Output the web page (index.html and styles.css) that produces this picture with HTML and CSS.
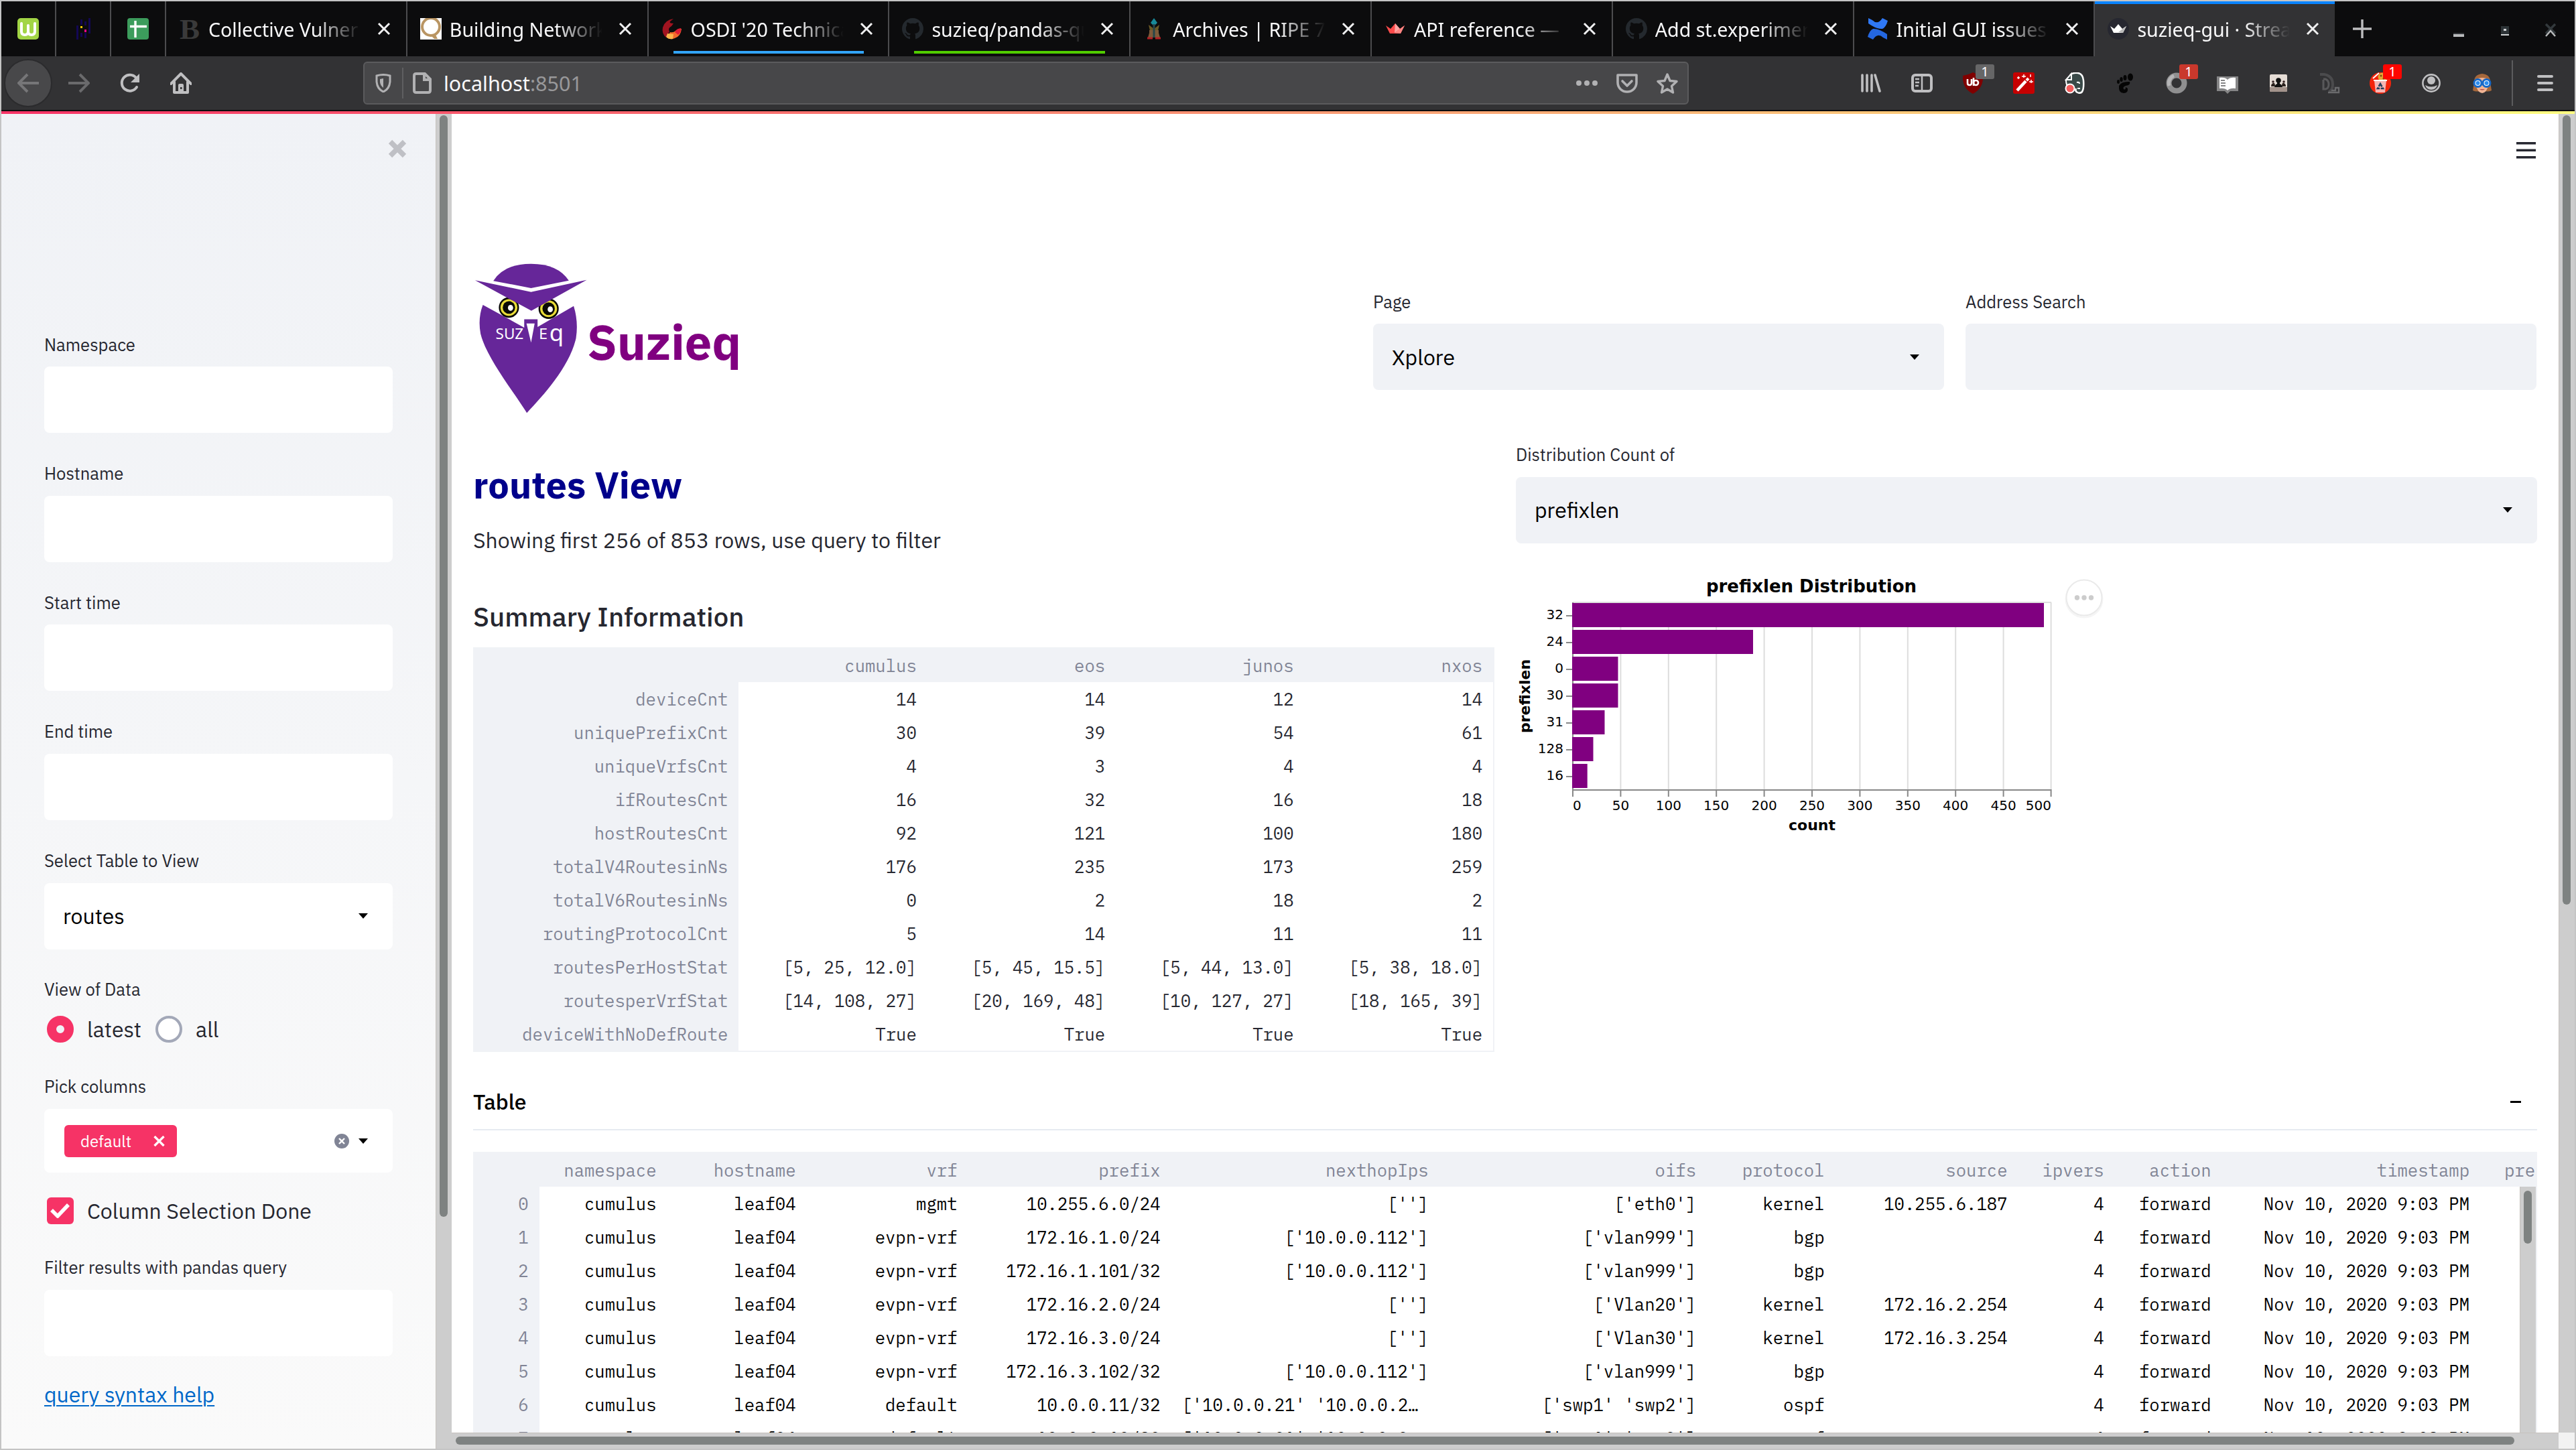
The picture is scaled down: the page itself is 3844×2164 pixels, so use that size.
FILE: index.html
```html
<!DOCTYPE html>
<html lang="en">
<head>
<meta charset="utf-8">
<title>suzieq-gui · Streamlit</title>
<link rel="stylesheet" href="styles.css">
</head>
<body>
<div class="window">
  <div class="tabstrip">
    <div class="pin"><svg class="ico" viewBox="0 0 32 32"><rect width="32" height="32" rx="5" fill="#a2d545"/><path d="M6 8v12q0 5 5 5t5-5v-9M16 20q0 5 5 5t5-5V8" fill="none" stroke="#fff" stroke-width="4" stroke-linecap="round"/></svg></div>
    <div class="pin"><svg class="ico" viewBox="0 0 32 32"><g fill="#130754"><path d="M6 11h3v21H6zM12 2h3v8h-3zM12 22h3v6h-3zM18 5h3v6h-3zM18 22h3v8h-3zM24 0h3v23h-3z"/></g><rect x="12" y="12" width="3" height="3" fill="#ffca00"/><rect x="18" y="17" width="3" height="4" fill="#e70488"/></svg></div>
    <div class="pin"><svg class="ico" viewBox="0 0 32 32"><rect width="32" height="32" rx="4" fill="#3c9c5c"/><path d="M12 4v25M4 12.500h25" stroke="#fff" stroke-width="3.400"/></svg></div>
    <div class="tab"><svg class="ico" viewBox="0 0 32 32"><text x="1" y="31" class="fav-b" textLength="30" lengthAdjust="spacingAndGlyphs">B</text></svg><span class="title">Collective Vulner</span><svg class="x" viewBox="0 0 20 20"><path d="M2 2l16 16M18 2L2 18"/></svg></div>
    <div class="tab"><svg class="ico" viewBox="0 0 32 32"><rect width="32" height="32" fill="#fff"/><circle cx="16" cy="13" r="13" fill="none" stroke="#b99563" stroke-width="4"/><path d="M15 25h8l3 6h-5z" fill="#b99563"/></svg><span class="title">Building Network</span><svg class="x" viewBox="0 0 20 20"><path d="M2 2l16 16M18 2L2 18"/></svg></div>
    <div class="tab blue"><svg class="ico" viewBox="0 0 32 32"><path d="M18 1Q5 3 2 14q-2 9 5 15l5-9q-3-5 3-8l3-4q-7 0-5-3z" fill="#a11420"/><path d="M30 16q-5-1-9 3-3 3-8 2l-5 8q5 4 12 1 9-3 10-14z" fill="#f36a2c"/><path d="M29 15q-7 1-9 6l5 4q5-4 4-10z" fill="#dd1c36"/><path d="M9 23l9 1-1 7q-6 1-10-3z" fill="#fcb64c"/></svg><span class="title">OSDI '20 Technica</span><svg class="x" viewBox="0 0 20 20"><path d="M2 2l16 16M18 2L2 18"/></svg></div>
    <div class="tab green"><svg class="ico" viewBox="0 0 16 16"><path class="gh" d="M8 0C3.58 0 0 3.58 0 8c0 3.54 2.29 6.53 5.47 7.59.4.07.55-.17.55-.38 0-.19-.01-.82-.01-1.49-2.01.37-2.53-.49-2.69-.94-.09-.23-.48-.94-.82-1.13-.28-.15-.68-.52-.01-.53.63-.01 1.08.58 1.23.82.72 1.21 1.87.87 2.33.66.07-.52.28-.87.51-1.07-1.78-.2-3.64-.89-3.64-3.95 0-.87.31-1.59.82-2.15-.08-.2-.36-1.02.08-2.12 0 0 .67-.21 2.2.82a7.6 7.6 0 014 0c1.53-1.04 2.2-.82 2.2-.82.44 1.1.16 1.92.08 2.12.51.56.82 1.27.82 2.15 0 3.07-1.87 3.75-3.65 3.95.29.25.54.73.54 1.48 0 1.07-.01 1.93-.01 2.2 0 .21.15.46.55.38A8 8 0 0016 8c0-4.42-3.58-8-8-8z"/></svg><span class="title">suzieq/pandas-qu</span><svg class="x" viewBox="0 0 20 20"><path d="M2 2l16 16M18 2L2 18"/></svg></div>
    <div class="tab"><svg class="ico" viewBox="0 0 32 32"><path d="M16 0l5 7-5 5-5-5z" fill="#178a99"/><path d="M8 10l8 6 8-6-2 9h-12z" fill="#6b5a25"/><path d="M9 18h14v4l2 7H7l2-7z" fill="#7d5a3a"/><path d="M16 9v20" stroke="#27464a" stroke-width="3"/><path d="M6 30h8M18 30h8" stroke="#b21f24" stroke-width="3"/></svg><span class="title">Archives | RIPE 71</span><svg class="x" viewBox="0 0 20 20"><path d="M2 2l16 16M18 2L2 18"/></svg></div>
    <div class="tab"><svg class="ico" viewBox="0 0 32 32"><path d="M2 11l6 12h16l6-12-7 5-7-8-7 8z" fill="#ff4b4b"/><path d="M16 8l7 8-8 6z" fill="#ffa5a3"/><path d="M30 11l-6 12-9-1z" fill="#ff8784"/></svg><span class="title">API reference —</span><svg class="x" viewBox="0 0 20 20"><path d="M2 2l16 16M18 2L2 18"/></svg></div>
    <div class="tab"><svg class="ico" viewBox="0 0 16 16"><path class="gh" d="M8 0C3.58 0 0 3.58 0 8c0 3.54 2.29 6.53 5.47 7.59.4.07.55-.17.55-.38 0-.19-.01-.82-.01-1.49-2.01.37-2.53-.49-2.69-.94-.09-.23-.48-.94-.82-1.13-.28-.15-.68-.52-.01-.53.63-.01 1.08.58 1.23.82.72 1.21 1.87.87 2.33.66.07-.52.28-.87.51-1.07-1.78-.2-3.64-.89-3.64-3.95 0-.87.31-1.59.82-2.15-.08-.2-.36-1.02.08-2.12 0 0 .67-.21 2.2.82a7.6 7.6 0 014 0c1.53-1.04 2.2-.82 2.2-.82.44 1.1.16 1.92.08 2.12.51.56.82 1.27.82 2.15 0 3.07-1.87 3.75-3.65 3.95.29.25.54.73.54 1.48 0 1.07-.01 1.93-.01 2.2 0 .21.15.46.55.38A8 8 0 0016 8c0-4.42-3.58-8-8-8z"/></svg><span class="title">Add st.experimer</span><svg class="x" viewBox="0 0 20 20"><path d="M2 2l16 16M18 2L2 18"/></svg></div>
    <div class="tab"><svg class="ico" viewBox="0 0 32 32"><path d="M2 0l6 3q8 8 15-3l8 4q-3 10-8 12-8 1-21-8z" fill="#2f78f5"/><path d="M30 32l-6-3q-8-8-15 3l-8-4q3-10 8-12 8-1 21 8z" fill="#2467e0"/></svg><span class="title">Initial GUI issues -</span><svg class="x" viewBox="0 0 20 20"><path d="M2 2l16 16M18 2L2 18"/></svg></div>
    <div class="tab active"><svg class="ico" viewBox="0 0 32 32"><circle cx="16" cy="16" r="16" fill="#262730"/><path d="M4 12l5 10h14l5-10-6 4-6-7-6 7z" fill="#fff"/><path d="M28 12l-5 10-7-1z" fill="#bbb"/></svg><span class="title">suzieq-gui · Strea</span><svg class="x" viewBox="0 0 20 20"><path d="M2 2l16 16M18 2L2 18"/></svg></div>
    <svg class="plus" viewBox="0 0 28 28"><path d="M14 0v28M0 14h28" stroke="#bdbdbf" stroke-width="3.4"/></svg>
    <div class="controls">
      <svg width="16" height="20" viewBox="0 0 16 20"><path d="M0 14h16v2H0z" fill="#323436"/><path d="M0 16h16v4H0z" fill="#b8babb"/></svg>
      <svg width="12" height="20" viewBox="0 0 12 20"><path d="M0 4h12v12H0z" fill="#2d3336"/><path d="M4 8h4v3H4zM0 16h12v2H0z" fill="#d0d2d3"/></svg>
      <svg width="16" height="20" viewBox="0 0 16 20"><path d="M1 1l14 14M15 1L1 15" stroke="#33393c" stroke-width="3.5"/><path d="M1 19l7-8 7 8" stroke="#b8babb" stroke-width="2.4" fill="none"/></svg>
    </div>
  </div>

  <div class="toolbar">
    <div class="nav">
      <div class="back"><svg class="ico" viewBox="0 0 32 32"><path d="M15 3L2 16l13 13M2 16h30" fill="none" stroke="#767678" stroke-width="4"/></svg></div>
      <svg class="ico" viewBox="0 0 32 32"><path d="M17 3l13 13-13 13M30 16H0" fill="none" stroke="#6a6a6c" stroke-width="4"/></svg>
      <svg class="ico" viewBox="0 0 32 32"><path d="M26 22A12 12 0 1 1 25 8" fill="none" stroke="#bfbfc1" stroke-width="4" stroke-linecap="round"/><path d="M30 2v13H17z" fill="#bfbfc1"/></svg>
      <svg class="ico" viewBox="0 0 32 32"><path d="M1 17L16 2l15 15M6 14v16h20V14" fill="none" stroke="#bfbfc1" stroke-width="4" stroke-linejoin="round" stroke-linecap="round"/><path d="M12 31V19q0-2 2-2h4q2 0 2 2v12z" fill="#bfbfc1"/><rect x="15" y="22" width="2.5" height="3" fill="#323234"/></svg>
    </div>
    <div class="urlbar">
      <svg class="shield" viewBox="0 0 24 28"><path d="M2 3q10-3 20 0v9q-1 11-10 15Q3 23 2 12z" fill="none" stroke="#b1b1b3" stroke-width="3"/><path d="M12 7v14q-5-4-5-9V8z" fill="#b1b1b3"/></svg>
      <i class="sep"></i>
      <svg class="page" viewBox="0 0 28 32"><path d="M5 2h13l8 8v17q0 3-3 3H5q-3 0-3-3V5q0-3 3-3zM17 2v9h9" fill="none" stroke="#b1b1b3" stroke-width="4"/></svg>
      <span class="url"><b>localhost</b>:8501</span>
      <div class="urlactions">
        <svg class="ico" viewBox="0 0 32 32" fill="#b1b1b3"><circle cx="4" cy="16" r="4"/><circle cx="16" cy="16" r="4"/><circle cx="28" cy="16" r="4"/></svg>
        <svg class="ico" viewBox="0 0 32 32" fill="none" stroke="#b1b1b3" stroke-width="3.6" stroke-linejoin="round"><path d="M2 4h28v11a14 14 0 0 1-28 0z"/><path d="M9 13l7 7 7-7" stroke-linecap="round"/></svg>
        <svg class="ico" viewBox="0 0 32 32"><path d="M16 3l4 9.500 10 1-7.500 7 2 9.500-8.500-5-8.500 5 2-9.500-7.500-7 10-1z" fill="none" stroke="#b1b1b3" stroke-width="3.4" stroke-linejoin="round"/></svg>
      </div>
    </div>
    <div class="addons">
      <svg class="ico" viewBox="0 0 32 32" stroke="#bfbfc1" stroke-width="3.6" stroke-linecap="round"><path d="M3 4v24M10 4v24M17 4v24M22 4l7 24"/></svg>
      <svg class="ico" viewBox="0 0 32 32"><rect x="2" y="4" width="28" height="24" rx="4" fill="none" stroke="#bfbfc1" stroke-width="4"/><path d="M16 4v24M6 10h6M6 15h6M6 20h5" stroke="#bfbfc1" stroke-width="2.500"/></svg>
      <div class="addon"><svg class="ico" viewBox="0 0 32 32"><path d="M16 0q7 4 15 5 1 19-15 27Q0 24 1 5q8-1 15-5z" fill="#800000"/><path d="M8 10v6q0 3 3 3t3-3v-6M17 8v12" fill="none" stroke="#fff" stroke-width="2.600"/><circle cx="20.500" cy="15.500" r="3.500" fill="none" stroke="#fff" stroke-width="2.600"/></svg><em class="badge gray">1</em></div>
      <svg class="ico" viewBox="0 0 32 32"><rect width="32" height="32" rx="3" fill="#c60000"/><path d="M6 27L19 13" stroke="#fff" stroke-width="4.500"/><path d="M20 12l3-3" stroke="#fff" stroke-width="4"/><path d="M16 3v5M13 6h6M27 11v5M24 14h6M26 3v4M8 6v4M6 8h4" stroke="#fff" stroke-width="1.500"/></svg>
      <svg class="ico" viewBox="0 0 32 32"><path d="M9 4q4-4 12-3 7 1 8 11 1 12-2 17-3 3-7 1-4-2-2-6" fill="#3a4a49" stroke="#fff" stroke-width="2.500"/><path d="M3 11l8-9v9z" fill="#3a4a49" stroke="#fff" stroke-width="2"/><path d="M3 12h16v11H6q-3-4-3-11z" fill="#3a4a49"/><path d="M3 11q0 6 2 9" stroke="#fff" stroke-width="2" fill="none"/><circle cx="9" cy="24" r="6.500" fill="#f25c5c" stroke="#fff" stroke-width="2"/><path d="M19 15q4-1 4 2M20 24h4" stroke="#fff" stroke-width="2" fill="none"/></svg>
      <svg class="ico" viewBox="0 0 32 32" fill="#050505"><ellipse cx="23" cy="7" rx="4" ry="5.500"/><ellipse cx="15" cy="8" rx="2.500" ry="4"/><ellipse cx="9.500" cy="10.500" rx="2.200" ry="3.500"/><ellipse cx="5" cy="14" rx="2" ry="3"/><path d="M22 14q-12-1-16 6-1 11 7 11 7 0 6-7l-3-2q0 5-3 3-2-3 3-5 8-1 6-6z"/></svg>
      <div class="addon"><svg class="ico" viewBox="0 0 32 32"><circle cx="16" cy="16" r="11.500" fill="none" stroke="#8f8f90" stroke-width="8"/><path d="M5 20A12 12 0 0 1 12 5" fill="none" stroke="#b5b5b6" stroke-width="5"/></svg><em class="badge brick">1</em></div>
      <svg class="ico" viewBox="0 0 32 32"><path d="M0 6h32v22H20l-4 4-4-4H0z" fill="#858586"/><path d="M4 8q8-1 12 3 4-4 12-3v16q-8-1-12 3-4-4-12-3z" fill="#fff"/><path d="M6 12h6M6 16h7M6 20h7" stroke="#858586" stroke-width="2"/></svg>
      <svg class="ico" viewBox="0 0 32 32"><rect x="3" y="3" width="26" height="26" rx="2" fill="#e6ddd6"/><path d="M3 22h26v5q0 2-2 2H5q-2 0-2-2z" fill="#a3938b"/><circle cx="16" cy="12" r="3.800" fill="#111"/><path d="M10 22q1-4 4-5v-3h4v3q3 1 4 5z" fill="#111"/><path d="M5 21q0-4 3-5t3 5zM21 21q0-6 3-5t3 5z" fill="#2b211d"/><circle cx="8" cy="14" r="1.800" fill="#322"/><circle cx="24" cy="14" r="1.800" fill="#322"/></svg>
      <svg class="ico" viewBox="0 0 32 32" fill="none"><path d="M2 3h6q13 2 13 15 0 9-6 11" stroke="#4b4b4d" stroke-width="4"/><path d="M7 10h3q5 2 5 8t-5 7H7v-14" stroke="#58585a" stroke-width="3"/><path d="M14 30h16v-7h-5v4h-6" stroke="#6a6a6c" stroke-width="2.400"/></svg>
      <div class="addon"><svg class="ico" viewBox="0 0 32 32"><circle cx="16" cy="16" r="16" fill="#f3240c"/><circle cx="19" cy="7" r="6.500" fill="#e3a736"/><circle cx="17" cy="5" r="1.500" fill="#7a4a14"/><circle cx="21" cy="9" r="1.500" fill="#7a4a14"/><path d="M5 9l9-8" stroke="#fff" stroke-width="2"/><path d="M7 12h18l-2 18H9z" fill="#f6b6b4"/><path d="M6 12h20" stroke="#fff" stroke-width="2"/><path d="M16 17l4 7h-8z" fill="none" stroke="#24415f" stroke-width="2.600" stroke-dasharray="5 1.500"/></svg><em class="badge red">1</em></div>
      <svg class="ico" viewBox="0 0 32 32"><circle cx="16" cy="16" r="12.600" fill="none" stroke="#bfbfc1" stroke-width="2.600"/><circle cx="16" cy="12" r="6" fill="#bfbfc1"/><path d="M7 19q9 5 18 0-2 7-9 7t-9-7z" fill="#bfbfc1"/></svg>
      <svg class="ico" viewBox="0 0 32 32"><path d="M16 2Q4 3 4 14l-2 13q6 3 14 0 8 3 14 0l-2-13Q28 3 16 2z" fill="#a6683c"/><path d="M7 10q9-4 18 0v10q-2 10-9 11-7-1-9-11z" fill="#f0b595"/><path d="M12 25q4 3 8 0z" fill="#b34a4a"/><circle cx="9.500" cy="16" r="5.500" fill="#fff" stroke="#1668c7" stroke-width="3"/><circle cx="22.500" cy="16" r="5.500" fill="#fff" stroke="#1668c7" stroke-width="3"/><circle cx="9.500" cy="16" r="3" fill="#2a8cf0"/><circle cx="22.500" cy="16" r="3" fill="#2a8cf0"/></svg>
    </div>
    <i class="barsep"></i>
    <svg class="menu" viewBox="0 0 24 24" stroke="#bfbfc1" stroke-width="4" stroke-linecap="round"><path d="M2 2h20M2 12h20M2 22h20"/></svg>
  </div>
  <div class="rainbow"></div>

  <div class="content">
    <aside class="sidebar">
      <svg class="close" viewBox="0 0 28 28"><path d="M3.500 3.500l21 21M24.500 3.500l-21 21" stroke="#bfc0c5" stroke-width="7.500"/></svg>
      <div class="field"><label>Namespace</label><div class="box"></div></div>
      <div class="field"><label>Hostname</label><div class="box"></div></div>
      <div class="field"><label>Start time</label><div class="box"></div></div>
      <div class="field"><label>End time</label><div class="box"></div></div>
      <div class="field"><label>Select Table to View</label><div class="box">routes<svg class="caret" viewBox="0 0 14 8"><path d="M0 0h14L7 8z"/></svg></div></div>
      <div class="field radios"><label>View of Data</label>
        <div class="choices"><span class="radio on"></span><span class="opt">latest</span><span class="radio"></span><span class="opt">all</span></div>
      </div>
      <div class="field pick"><label>Pick columns</label>
        <div class="box"><span class="tag">default<svg width="17" height="16" viewBox="0 0 17 16"><path d="M1.500 1l14 14M15.500 1l-14 14" stroke="#fff" stroke-width="3.400"/></svg></span>
          <svg class="clear" viewBox="0 0 22 22"><circle cx="11" cy="11" r="11" fill="#808495"/><path d="M7 7l8 8M15 7l-8 8" stroke="#fff" stroke-width="2.400"/></svg><svg class="caret" viewBox="0 0 14 8"><path d="M0 0h14L7 8z"/></svg></div>
      </div>
      <div class="check"><span class="tick"><svg width="30" height="22" viewBox="0 0 30 22"><path d="M2 10l9 9L27 2" fill="none" stroke="#fff" stroke-width="5.500"/></svg></span>Column Selection Done</div>
      <div class="field"><label>Filter results with pandas query</label><div class="box"></div></div>
      <a class="help">query syntax help</a>
    </aside>
    <div class="vscroll side"><i></i></div>

    <div class="pane">
      <div class="paneRow">
        <main class="main">
          <div class="topline"><svg width="29" height="26" viewBox="0 0 29 26" fill="#262730"><path d="M0 1h29v3.600H0zM0 11.500h29v3.600H0zM0 22h29v3.600H0z"/></svg></div>
          <div class="masthead">
            <svg class="owl" viewBox="54 70 350 510" preserveAspectRatio="none">
              <path fill="#662699" d="M116 133Q150 76 232 76T348 132L232 157z"/>
              <path fill="#662699" d="M84 213L211 289V261H252V287L363 217Q378 270 370 325C350 420 270 515 219 574C180 505 95 390 77 310Q68 258 84 213z"/>
              <g fill="#0a0a05"><ellipse cx="164" cy="222" rx="31" ry="34"/><ellipse cx="286" cy="226" rx="31" ry="34"/></g>
              <g fill="#e9dc38"><ellipse cx="164" cy="222" rx="26" ry="28"/><ellipse cx="286" cy="226" rx="26" ry="28"/></g>
              <g fill="#0a0a05"><ellipse cx="164" cy="222" rx="19" ry="21"/><ellipse cx="286" cy="226" rx="19" ry="21"/></g>
              <g fill="#fff"><ellipse cx="169" cy="223" rx="8" ry="10"/><ellipse cx="291" cy="228" rx="8" ry="10"/></g>
              <path fill="#662699" d="M60 131L232 170 403 130 233 233z"/>
              <path fill="#fff" d="M218 275h25l-11 64z"/>
              <g class="owltext"><text x="123" y="328" font-size="50" textLength="86" lengthAdjust="spacingAndGlyphs">SUZ</text><text x="256" y="328" font-size="50" textLength="27" lengthAdjust="spacingAndGlyphs">E</text><text x="288" y="334" font-size="78" textLength="44" lengthAdjust="spacingAndGlyphs">q</text></g>
            </svg>
            <h1>Suzieq</h1>
            <div class="field"><label>Page</label><div class="box">Xplore<svg class="caret" viewBox="0 0 14 8"><path d="M0 0h14L7 8z"/></svg></div></div>
            <div class="field"><label>Address Search</label><div class="box"></div></div>
          </div>

          <div class="overview">
            <section>
              <h2>routes View</h2>
              <p>Showing first 256 of 853 rows, use query to filter</p>
              <h3>Summary Information</h3>
              <table class="summary">
                <thead><tr><th></th><th>cumulus</th><th>eos</th><th>junos</th><th>nxos</th></tr></thead>
                <tbody>
                <tr><th>deviceCnt</th><td>14</td><td>14</td><td>12</td><td>14</td></tr>
                <tr><th>uniquePrefixCnt</th><td>30</td><td>39</td><td>54</td><td>61</td></tr>
                <tr><th>uniqueVrfsCnt</th><td>4</td><td>3</td><td>4</td><td>4</td></tr>
                <tr><th>ifRoutesCnt</th><td>16</td><td>32</td><td>16</td><td>18</td></tr>
                <tr><th>hostRoutesCnt</th><td>92</td><td>121</td><td>100</td><td>180</td></tr>
                <tr><th>totalV4RoutesinNs</th><td>176</td><td>235</td><td>173</td><td>259</td></tr>
                <tr><th>totalV6RoutesinNs</th><td>0</td><td>2</td><td>18</td><td>2</td></tr>
                <tr><th>routingProtocolCnt</th><td>5</td><td>14</td><td>11</td><td>11</td></tr>
                <tr><th>routesPerHostStat</th><td>[5, 25, 12.0]</td><td>[5, 45, 15.5]</td><td>[5, 44, 13.0]</td><td>[5, 38, 18.0]</td></tr>
                <tr><th>routesperVrfStat</th><td>[14, 108, 27]</td><td>[20, 169, 48]</td><td>[10, 127, 27]</td><td>[18, 165, 39]</td></tr>
                <tr><th>deviceWithNoDefRoute</th><td>True</td><td>True</td><td>True</td><td>True</td></tr>
                </tbody>
              </table>
            </section>
            <section>
              <div class="field"><label>Distribution Count of</label><div class="box">prefixlen<svg class="caret" viewBox="0 0 14 8"><path d="M0 0h14L7 8z"/></svg></div></div>
              <div class="chartRow">
              <svg class="chart" width="810" height="400" viewBox="2262 850 810 400">
                <text class="t" x="2703" y="884" text-anchor="middle">prefixlen Distribution</text>
                <path stroke="#ddd" stroke-width="2" fill="none" d="M2418.400 899v280M2489.800 899v280M2561.200 899v280M2632.600 899v280M2704 899v280M2775.400 899v280M2846.800 899v280M2918.200 899v280M2989.600 899v280M3060.600 899v280M2347 899h714"/>
                <path stroke="#888" stroke-width="2" fill="none" d="M2347 899v290M2337 919h10M2337 959h10M2337 999h10M2337 1039h10M2337 1079h10M2337 1119h10M2337 1159h10M2346 1179h715.600M2418.400 1179v10M2489.800 1179v10M2561.200 1179v10M2632.600 1179v10M2704 1179v10M2775.400 1179v10M2846.800 1179v10M2918.200 1179v10M2989.600 1179v10M3060.600 1179v10"/>
                <g fill="#800080"><rect x="2346" y="900" width="704" height="36"/><rect x="2346" y="940" width="270" height="36"/><rect x="2346" y="980" width="68.500" height="36"/><rect x="2346" y="1020" width="68.500" height="36"/><rect x="2346" y="1060" width="48.500" height="36"/><rect x="2346" y="1100" width="31.500" height="36"/><rect x="2346" y="1140" width="22.700" height="36"/></g>
                <g text-anchor="end"><text x="2333" y="924">32</text><text x="2333" y="964">24</text><text x="2333" y="1004">0</text><text x="2333" y="1044">30</text><text x="2333" y="1084">31</text><text x="2333" y="1124">128</text><text x="2333" y="1164">16</text></g>
                <text x="2347" y="1209">0</text>
                <g text-anchor="middle"><text x="2418.400" y="1209">50</text><text x="2489.800" y="1209">100</text><text x="2561.200" y="1209">150</text><text x="2632.600" y="1209">200</text><text x="2704" y="1209">250</text><text x="2775.400" y="1209">300</text><text x="2846.800" y="1209">350</text><text x="2918.200" y="1209">400</text><text x="2989.600" y="1209">450</text></g>
                <text x="3061" y="1209" text-anchor="end">500</text>
                <text class="a" x="2704" y="1239" text-anchor="middle">count</text>
                <text class="a" transform="translate(2283 1039) rotate(-90)" text-anchor="middle">prefixlen</text>
              </svg>
              <svg class="more" width="60" height="64" viewBox="0 0 60 64"><circle cx="30" cy="33" r="27" fill="none" stroke="#f5f5f5" stroke-width="3"/><circle cx="30" cy="31" r="26.500" fill="#fff" stroke="#eaeaea" stroke-width="2"/><g fill="#ccc"><circle cx="19.500" cy="31" r="3.700"/><circle cx="30" cy="31" r="3.700"/><circle cx="40.500" cy="31" r="3.700"/></g></svg>
              </div>
            </section>
          </div>

          <div class="expander"><span>Table</span><i></i></div>

          <div class="grid">
            <table class="data">
              <colgroup><col class="c0"><col class="c1"><col class="c2"><col class="c3"><col class="c4"><col class="c5"><col class="c6"><col class="c7"><col class="c8"><col class="c9"><col class="c10"><col class="c11"><col class="c12"></colgroup>
              <thead><tr><th></th><th>namespace</th><th>hostname</th><th>vrf</th><th>prefix</th><th>nexthopIps</th><th>oifs</th><th>protocol</th><th>source</th><th>ipvers</th><th>action</th><th>timestamp</th><th class="cut">prefixlen</th></tr></thead>
              <tbody>
              <tr><th>0</th><td>cumulus</td><td>leaf04</td><td>mgmt</td><td>10.255.6.0/24</td><td>['']</td><td>['eth0']</td><td>kernel</td><td>10.255.6.187</td><td>4</td><td>forward</td><td>Nov 10, 2020 9:03 PM</td><td></td></tr>
              <tr><th>1</th><td>cumulus</td><td>leaf04</td><td>evpn-vrf</td><td>172.16.1.0/24</td><td>['10.0.0.112']</td><td>['vlan999']</td><td>bgp</td><td></td><td>4</td><td>forward</td><td>Nov 10, 2020 9:03 PM</td><td></td></tr>
              <tr><th>2</th><td>cumulus</td><td>leaf04</td><td>evpn-vrf</td><td>172.16.1.101/32</td><td>['10.0.0.112']</td><td>['vlan999']</td><td>bgp</td><td></td><td>4</td><td>forward</td><td>Nov 10, 2020 9:03 PM</td><td></td></tr>
              <tr><th>3</th><td>cumulus</td><td>leaf04</td><td>evpn-vrf</td><td>172.16.2.0/24</td><td>['']</td><td>['Vlan20']</td><td>kernel</td><td>172.16.2.254</td><td>4</td><td>forward</td><td>Nov 10, 2020 9:03 PM</td><td></td></tr>
              <tr><th>4</th><td>cumulus</td><td>leaf04</td><td>evpn-vrf</td><td>172.16.3.0/24</td><td>['']</td><td>['Vlan30']</td><td>kernel</td><td>172.16.3.254</td><td>4</td><td>forward</td><td>Nov 10, 2020 9:03 PM</td><td></td></tr>
              <tr><th>5</th><td>cumulus</td><td>leaf04</td><td>evpn-vrf</td><td>172.16.3.102/32</td><td>['10.0.0.112']</td><td>['vlan999']</td><td>bgp</td><td></td><td>4</td><td>forward</td><td>Nov 10, 2020 9:03 PM</td><td></td></tr>
              <tr><th>6</th><td>cumulus</td><td>leaf04</td><td>default</td><td>10.0.0.11/32</td><td>['10.0.0.21' '10.0.0.22']</td><td>['swp1' 'swp2']</td><td>ospf</td><td></td><td>4</td><td>forward</td><td>Nov 10, 2020 9:03 PM</td><td></td></tr>
              <tr><th>7</th><td>cumulus</td><td>leaf04</td><td>default</td><td>10.0.0.12/32</td><td>['10.0.0.21' '10.0.0.22']</td><td>['swp1' 'swp2']</td><td>ospf</td><td></td><td>4</td><td>forward</td><td>Nov 10, 2020 9:03 PM</td><td></td></tr>
              </tbody>
            </table>
            <div class="vscroll inner"><i></i></div>
          </div>
        </main>
        <div class="vscroll page-scroll"><i></i></div>
      </div>
      <div class="hscroll"><div><i></i></div><b></b></div>
    </div>
  </div>
</div>
</body>
</html>
```
FILE: styles.css
```css
* { box-sizing: border-box; }
html, body { margin: 0; height: 100%; }
body { width: 3844px; height: 2164px; overflow: hidden; font-family: "IBM Plex Sans", "Roboto", sans-serif; color: #262730; }
svg { display: block; flex: none; }
.window { width: 3844px; height: 2164px; border: 2px solid #c4c4c4; display: flex; flex-direction: column; background: #fff; overflow: hidden; }
.ico { width: 32px; height: 32px; }

/* tabs */
.tabstrip { flex: none; height: 82px; background: #0c0c0d; display: flex; color: #f9f9fa; font: 28.6px "Noto Sans", sans-serif; }
.pin { width: 82px; padding-left: 24px; display: flex; align-items: center; border-right: 2px solid #4c4c4e; }
.tab { position: relative; width: 359.8px; padding-left: 19px; display: flex; align-items: center; border-right: 2px solid #4c4c4e; }
.tab .title { width: 228px; margin-left: 12px; white-space: nowrap; overflow: hidden; -webkit-mask-image: linear-gradient(90deg, #000 70%, transparent); mask-image: linear-gradient(90deg, #000 70%, transparent); }
.tab .x { width: 20px; height: 20px; margin-left: 24px; stroke: #f0f0f1; stroke-width: 3; fill: none; }
.tab.active { background: #323234; border: 0; border-top: 4px solid #0a84ff; padding-bottom: 4px; width: 358px; }
.tab.blue::after, .tab.green::after { content: ""; position: absolute; left: 37px; right: 36px; bottom: 4px; height: 4px; background: #32a5fb; }
.tab.green::after { background: #51cd00; }
.gh { fill: #24292e; }
.fav-b { font: bold 42px "Liberation Serif", serif; fill: #3a3a3a; }
.plus { width: 28px; height: 28px; margin: 27px 0 0 27px; }
.controls { margin-left: auto; padding: 33px 28px 0 0; display: flex; gap: 54px; }
.controls svg:nth-child(2) { margin-left: 1px; }

/* navigation toolbar */
.toolbar { flex: none; height: 82px; background: #323234; border-bottom: 2px solid #0c0c0d; display: flex; align-items: center; }
.nav { width: 540px; display: flex; align-items: center; gap: 44px; padding-left: 4px; }
.nav > svg:nth-child(2) { margin-left: -20px; }
.back { width: 72px; height: 72px; border-radius: 50%; background: #48484a; border: 2px solid #2b2b2d; display: flex; align-items: center; justify-content: center; }
.urlbar { width: 1978px; height: 64px; background: #474749; border: 2px solid #5b5b5d; border-radius: 6px; display: flex; align-items: center; padding: 0 14px 0 16px; }
.shield { width: 24px; height: 28px; }
.sep { width: 2px; height: 46px; background: #5f5f61; margin: 0 14px 0 16px; }
.page { width: 28px; height: 32px; }
.url { margin-left: 18px; font: 30.5px "Noto Sans", sans-serif; color: #98989a; }
.url b { font-weight: 400; color: #f9f9fa; }
.urlactions { margin-left: auto; display: flex; gap: 28px; }
.addons { margin-left: 256px; display: flex; gap: 44px; }
.addon { position: relative; }
.badge { position: absolute; left: 20px; top: -12px; width: 28px; height: 22px; border-radius: 3px; font: 20px/22px "Noto Sans", sans-serif; text-align: center; color: #fff; }
.badge.gray { background: #666667; }
.badge.brick { background: #c9382c; }
.badge.red { background: #fe0500; }
.barsep { width: 2px; height: 68px; background: #5c5c5e; margin-left: 28px; }
.menu { width: 24px; height: 24px; margin-left: 36px; }
.rainbow { flex: none; height: 4px; background: linear-gradient(90deg, #f63366, #fffd80); }

/* scrollbars */
.vscroll { flex: none; width: 24px; background: #cdcdcd; border-left: 1px solid #c6c2bd; padding: 2px 0 0 5px; }
.vscroll i { display: block; width: 12px; border-radius: 6px; background: #7e8281; }
.side i { height: 1644px; }
.page-scroll i { height: 1178px; }
.hscroll { flex: none; height: 24px; display: flex; background: #cdcdcd; }
.hscroll div { flex: 1; border-top: 1px solid #c6c2bd; padding: 5px 0 0 6px; }
.hscroll i { display: block; width: 3072px; height: 12px; border-radius: 6px; background: #7e8281; }
.hscroll b { width: 24px; background: #f2f2f2; }

.content { flex: 1; min-height: 0; display: flex; }

/* form controls */
.field label { display: block; font-size: 25.6px; line-height: 41px; margin-bottom: 12.8px; }
.box { height: 99px; border-radius: 8px; background: #f0f2f6; display: flex; align-items: center; padding: 0 37px 0 28px; font-size: 32px; color: #000; }
.caret { width: 14px; height: 8px; margin-left: auto; }

/* sidebar */
.sidebar { width: 648px; flex: none; background: linear-gradient(#f0f2f6, #fafafa); padding: 38px 64px 0; overflow: hidden; }
.sidebar .box { background: #fff; }
.sidebar .field { margin-bottom: 39.8px; }
.close { width: 28px; height: 28px; margin: 0 -21px 257.5px auto; }
.radios label { margin-bottom: 18.5px; }
.choices { display: flex; align-items: center; height: 40px; padding-left: 4px; font-size: 32px; }
.radio { width: 40px; height: 40px; border-radius: 50%; border: 4px solid #a3a8b8; background: #fff; }
.radio.on { border: 14px solid #f63366; background: #f0f2f6; }
.opt { margin: 0 21px 0 20px; }
.sidebar .radios { margin-bottom: 45.5px; }
.pick .box { height: 95px; padding-left: 30px; }
.tag { width: 168px; height: 48px; border-radius: 6px; background: #f63366; color: #fff; font-size: 24px; padding: 0 18px 0 24px; display: flex; align-items: center; justify-content: space-between; }
.clear { width: 22px; height: 22px; margin-left: auto; }
.clear + .caret { margin-left: 14px; }
.sidebar .pick { margin-bottom: 37px; }
.check { display: flex; align-items: center; height: 40px; gap: 20px; padding-left: 4px; font-size: 32px; margin-bottom: 44px; }
.tick { width: 40px; height: 40px; border-radius: 6px; background: #f63366; display: flex; align-items: center; justify-content: center; }
.sidebar .check + .field { margin-bottom: 30.5px; }
.help { display: block; font-size: 32px; line-height: 52px; color: #0068c9; text-decoration: underline; text-decoration-thickness: 2px; text-underline-offset: 4px; text-decoration-skip-ink: auto; }

/* main pane */
.pane { flex: 1; min-width: 0; display: flex; flex-direction: column; }
.paneRow { flex: 1; min-height: 0; display: flex; }
.main { flex: 1; min-width: 0; overflow: hidden; padding: 0 32px; }
.topline { height: 221px; display: flex; justify-content: flex-end; padding: 41px 2px 0 0; }
.masthead { height: 267px; display: flex; align-items: flex-start; }
.owl { width: 170px; height: 228px; }
.owltext { fill: #fff; font-family: "Noto Sans", sans-serif; }
h1, h2, h3, p { margin: 0; }
h1 { margin: 73px 0 0 0; width: 1173px; font-size: 72px; line-height: 92px; font-weight: 700; color: #800080; }
.masthead .field { width: 852px; margin-top: 38.5px; }
.masthead .field + .field { margin-left: 32px; }
.overview { display: flex; gap: 32px; height: 945px; }
.overview section { width: 1524px; flex: none; }
h2 { margin-top: 29px; font-size: 56px; line-height: 72px; font-weight: 700; color: #00008b; }
p { margin-top: 20.5px; font-size: 32px; line-height: 52px; }
h3 { margin-top: 62px; font-size: 40px; line-height: 52px; font-weight: 500; }

table { border-collapse: separate; border-spacing: 0; table-layout: fixed; font: 25.6px/48px "IBM Plex Mono", "Liberation Mono", monospace; text-align: right; }
th, td { height: 50px; padding: 2px 16px 0; font-weight: 400; white-space: pre; overflow: hidden; text-overflow: ellipsis; }
th { background: #f0f2f6; color: #808495; text-align: right; }
thead th { height: 52px; padding-top: 4px; }
.summary { margin-top: 20.5px; width: 1524px; border-right: 2px solid #f0f2f6; border-bottom: 2px solid #f0f2f6; }
.summary th:first-child { width: 396.4px; }

.overview .field { height: 192px; }
.chartRow { display: flex; }
.chart text { font: 20px "DejaVu Sans", sans-serif; fill: #000; }
.chart .t { font: bold 26px "DejaVu Sans", sans-serif; }
.chart .a { font: bold 22px "DejaVu Sans", sans-serif; }
.more { margin: 11px 0 0 8px; }

.expander { height: 84px; border-bottom: 2px solid #e6eaf1; display: flex; align-items: center; justify-content: space-between; font-size: 32px; font-weight: 500; color: #000; }
.expander i { width: 16px; height: 3px; background: #000; margin-right: 24px; }
.grid { position: relative; margin-top: 32px; width: 3080px; overflow: hidden; border-right: 2px solid #f0f2f6; }
.data { width: 3200px; color: #000; }
.inner { position: absolute; right: 0; top: 52px; bottom: 0; padding-top: 6px; }
.inner i { height: 79px; }
.data .cut { padding-left: 36px; text-align: left; }
.c0 { width: 98.5px; } .c1 { width: 191px; } .c2 { width: 208px; } .c3 { width: 241px; }
.c4 { width: 303px; } .c5 { width: 400px; } .c6 { width: 399.5px; } .c7 { width: 191.5px; }
.c8 { width: 273px; } .c9 { width: 144px; } .c10 { width: 160px; } .c11 { width: 385.5px; }
```
